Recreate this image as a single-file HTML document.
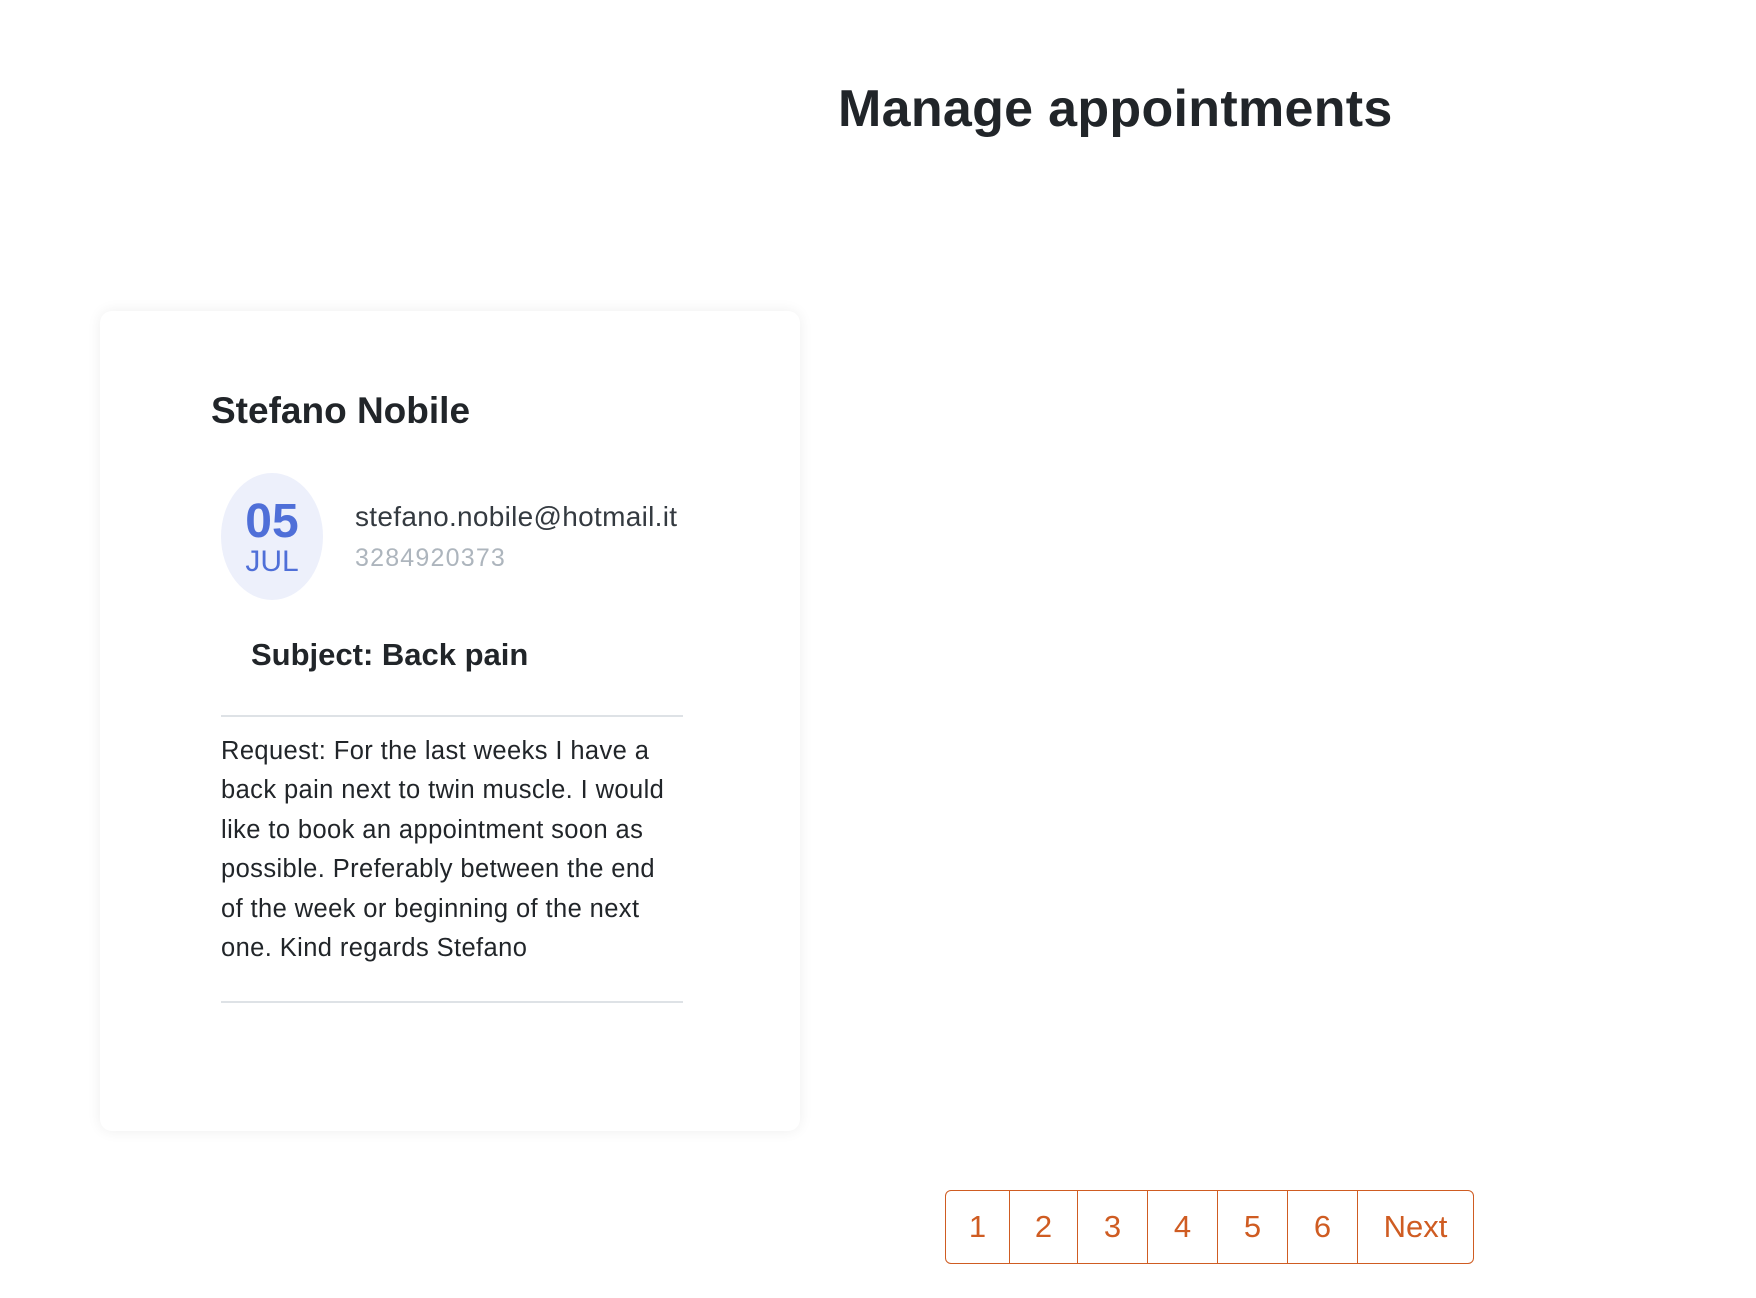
<!DOCTYPE html>
<html><head><meta charset="utf-8"><style>
body{margin:0;width:1756px;height:1298px;background:#fff;font-family:"Liberation Sans",Arial,sans-serif;color:#212529;position:relative;overflow:hidden}
.abs{position:absolute;white-space:nowrap}
h1{position:absolute;left:838px;top:76px;margin:0;font-size:52px;font-weight:600;line-height:66px;letter-spacing:0.3px}
.card{position:absolute;left:100px;top:311px;width:700px;height:820px;border-radius:12px;background:#fff;box-shadow:0 0 14px rgba(0,0,0,0.07)}
.circle{position:absolute;left:221px;top:473px;width:102px;height:127px;border-radius:50%;background:#edf0fb;color:#4f6fd8;text-align:center}
.hr{position:absolute;left:221px;width:462px;height:2px;background:#dee2e6}
.p{position:absolute;left:221px;top:732px;font-size:25.5px;line-height:39.4px;color:#212529;white-space:nowrap;letter-spacing:0.4px}
.pag{position:absolute;left:945px;top:1190px;height:72px;border:1.5px solid #cf5c22;border-radius:6px;display:flex;color:#cf5c22;font-size:31px}
.pag div{height:72px;line-height:72px;text-align:center;border-left:1.5px solid #cf5c22}
.pag div:first-child{border-left:none}
</style></head><body>
<h1>Manage appointments</h1>
<div class="card"></div>
<div class="abs" style="left:211px;top:388px;font-size:37px;font-weight:600;line-height:46px">Stefano Nobile</div>
<div class="circle"><div style="font-size:48px;font-weight:600;line-height:50px;margin-top:24px">05</div><div style="font-size:30px;line-height:30px">JUL</div></div>
<div class="abs" style="left:355px;top:500px;font-size:28px;line-height:34px;color:#343a40;letter-spacing:0.3px">stefano.nobile@hotmail.it</div>
<div class="abs" style="left:355px;top:542px;font-size:25px;line-height:32px;color:#adb5bd;letter-spacing:1.2px">3284920373</div>
<div class="abs" style="left:251px;top:635px;font-size:31px;font-weight:600;line-height:40px">Subject: Back pain</div>
<div class="hr" style="top:715px"></div>
<div class="p">Request: For the last weeks I have a<br>back pain next to twin muscle. I would<br>like to book an appointment soon as<br>possible. Preferably between the end<br>of the week or beginning of the next<br>one. Kind regards Stefano</div>
<div class="hr" style="top:1001px"></div>
<div class="pag"><div style="width:63px">1</div><div style="width:67px">2</div><div style="width:69px">3</div><div style="width:69px">4</div><div style="width:69px">5</div><div style="width:69px">6</div><div style="width:115px">Next</div></div>
</body></html>
